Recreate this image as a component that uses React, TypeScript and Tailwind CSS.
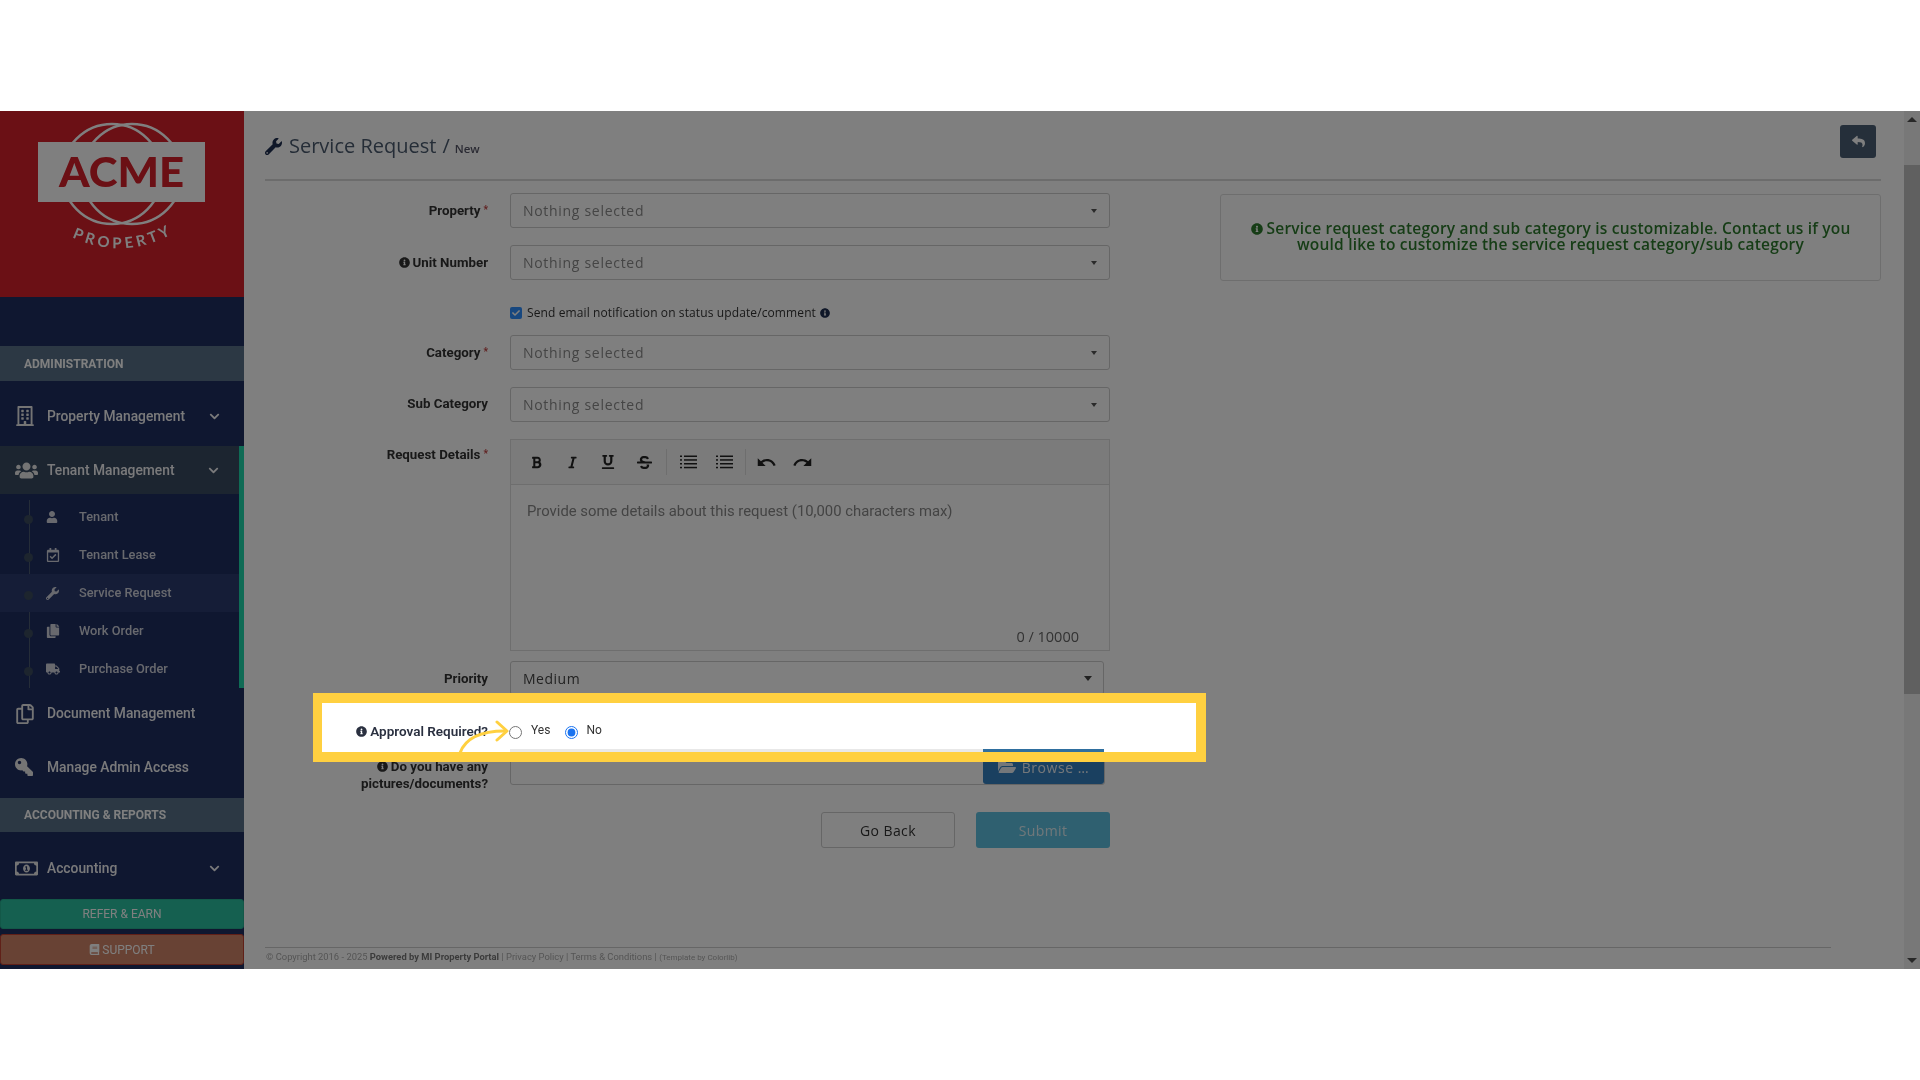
import React from 'react'
import {
  FaBold, FaBook, FaChevronDown, FaFolderOpen, FaInfoCircle, FaItalic, FaKey, FaRegBuilding,
  FaRegCalendarCheck, FaRegCopy, FaRegMoneyBillAlt, FaReply, FaStrikethrough, FaTruck, FaUnderline,
  FaUser, FaUsers, FaWrench, FaCheck, FaCopy,
} from 'react-icons/fa'
import { MdRedo, MdUndo } from 'react-icons/md'

const subItems = [
  { label: 'Tenant', icon: <FaUser size={12} /> },
  { label: 'Tenant Lease', icon: <FaRegCalendarCheck size={14} /> },
  { label: 'Service Request', icon: <FaWrench size={13} />, active: true },
  { label: 'Work Order', icon: <FaCopy size={14} /> },
  { label: 'Purchase Order', icon: <FaTruck size={14} /> },
]

function Logo() {
  return (
    <svg width="244" height="186" viewBox="0 111 244 186">
      <circle cx="112" cy="174" r="50" fill="none" stroke="#fff" strokeWidth="2.5" />
      <circle cx="132" cy="174" r="50" fill="none" stroke="#fff" strokeWidth="2.5" />
      <rect x="38" y="142" width="167" height="60" fill="#fff" />
      <text x="59" y="187" textLength="125" lengthAdjust="spacingAndGlyphs" fill="#d6202a" fontFamily="Lato" fontWeight="900" fontSize="41">ACME</text>
      <path id="logo-arc" d="M72 237 Q122 261 172 234" fill="none" />
      <text fill="#fff" fontFamily="Lato" fontWeight="700" fontSize="15" letterSpacing="3.7">
        <textPath href="#logo-arc">PROPERTY</textPath>
      </text>
    </svg>
  )
}

function ListIcon() {
  return (
    <svg width="17" height="14" viewBox="0 0 17 14" fill="currentColor">
      <rect x="0" y="0.5" width="2" height="1.5" />
      <rect x="0" y="4.2" width="2" height="1.5" />
      <rect x="0" y="8" width="2" height="1.5" />
      <rect x="0" y="11.8" width="2" height="1.5" />
      <rect x="4" y="0.5" width="13" height="1.5" />
      <rect x="4" y="4.2" width="13" height="1.5" />
      <rect x="4" y="8" width="13" height="1.5" />
      <rect x="4" y="11.8" width="13" height="1.5" />
    </svg>
  )
}

function NavRow({ icon, label, chevron, className }: { icon: React.ReactNode; label: string; chevron?: boolean; className: string }) {
  return (
    <div className={`flex items-center pl-[15px] text-[13.8px] font-medium text-[#f4f4f6] ${className}`}>
      <span className="flex w-[32px] shrink-0 text-[#e8e8e8]">{icon}</span>
      <span>{label}</span>
      {chevron && <FaChevronDown size={11} className="ml-auto" />}
    </div>
  )
}

function SectionHeader({ label, className }: { label: string; className: string }) {
  return (
    <div className={`flex items-center bg-[#587088] pl-6 text-[12px] font-bold text-[#fff] ${className}`}>{label}</div>
  )
}

function Sidebar() {
  return (
    <aside className="flex w-[244px] shrink-0 flex-col bg-[#1e2e60] font-['Roboto',sans-serif]">
      <div className="h-[186px] bg-[#d6202a]">
        <Logo />
      </div>
      <div className="h-[49px]" />
      <SectionHeader label="ADMINISTRATION" className="h-[35px]" />
      <NavRow icon={<FaRegBuilding size={20} />} label="Property Management" chevron className="mt-[8px] h-[54px] pr-[24px]" />
      <div className="mt-[3px] border-r-[5px] border-[#1ed6aa]">
        <NavRow icon={<FaUsers size={23} />} label="Tenant Management" chevron className="h-[48px] bg-[#384a60] pr-[20px]" />
        <div className="relative pt-[4px]">
          <div className="absolute bottom-0 left-[29px] top-[6px] w-px bg-[#4a5a70]" />
          {subItems.map((item) => (
            <div key={item.label} className={`relative flex h-[38px] items-center pl-[46px] text-[12.8px] font-medium text-[#d0d2dc] ${item.active ? 'bg-[#2a3a6e]' : ''}`}>
              <span className="absolute left-[24px] top-[17px] h-[9px] w-[9px] rounded-full bg-[#3a4a5c]" />
              <span className="w-[33px]">{item.icon}</span>
              <span>{item.label}</span>
            </div>
          ))}
        </div>
      </div>
      <NavRow icon={<FaRegCopy size={20} />} label="Document Management" className="h-[51px]" />
      <NavRow icon={<FaKey size={18} className="-scale-x-100" />} label="Manage Admin Access" className="mt-[1px] h-[54px]" />
      <SectionHeader label="ACCOUNTING &amp; REPORTS" className="mt-[4px] h-[34px]" />
      <NavRow icon={<FaRegMoneyBillAlt size={23} />} label="Accounting" chevron className="mt-[9px] h-[54px] pr-[24px]" />
      <div className="mt-[4px] flex h-[30px] items-center justify-center rounded-[3px] border border-[#26b090] bg-[#2ac0a0] text-[12px] text-white">REFER &amp; EARN</div>
      <div className="mt-[5px] flex h-[31px] items-center justify-center gap-[2px] rounded-[3px] border border-[#c04030] bg-[#d08468] text-[12px] text-white">
        <FaBook size={11} /> SUPPORT
      </div>
    </aside>
  )
}

function FormRow({ label, required, info, className, labelClass, children }: {
  label: React.ReactNode; required?: boolean; info?: boolean; className: string; labelClass?: string; children: React.ReactNode
}) {
  return (
    <div className={`flex gap-[22px] ${className}`}>
      <label className={`w-[223px] shrink-0 text-right font-['Roboto',sans-serif] text-[13.3px] font-bold leading-[17px] text-[#333] ${labelClass ?? 'self-center'}`}>
        {info && <FaInfoCircle size={11} className="mr-[3px] inline align-[-1px]" />}
        {label}
        {required && <span className="ml-[3px] align-[2px] text-[10px] text-[#c04040]">*</span>}
      </label>
      {children}
    </div>
  )
}

function SelectBox({ text = 'Nothing selected' }: { text?: string }) {
  return (
    <div className="flex h-[35px] w-[600px] items-center rounded-[3px] border border-[#ccc] bg-white pl-[12px] pr-[12px] font-['Open_Sans',sans-serif] text-[14px] tracking-[0.7px] text-[#8a8a8a]">
      {text}
      <span className="ml-auto h-0 w-0 border-x-[3.5px] border-t-[4px] border-x-transparent border-t-[#555]" />
    </div>
  )
}

function ToolButton({ children }: { children: React.ReactNode }) {
  return <span className="flex w-[36px] justify-center text-[#222]">{children}</span>
}

function MainPanel() {
  return (
    <main className="flex min-w-0 flex-1 flex-col bg-white pl-[21px] pr-[23px]">
      <header className="flex h-[70px] shrink-0 items-start border-b-2 border-[#d8d8d8]">
        <div className="mt-[20px] flex items-baseline font-['Open_Sans',sans-serif] text-[#4a5a6e]">
          <FaWrench size={17} className="mr-[7px] self-center text-[#1e2e50]" />
          <span className="text-[20px]">Service Request</span>
          <span className="ml-[6px] text-[20px]">/</span>
          <span className="ml-[5px] text-[11.5px] font-semibold text-[#556]">New</span>
        </div>
        <button className="ml-auto mr-[5px] mt-[14px] flex h-[33px] w-[36px] items-center justify-center rounded-[3px] bg-[#4a5f75] text-white">
          <FaReply size={13} />
        </button>
      </header>
      <div className="flex">
        <div className="w-[845px] shrink-0">
          <FormRow label="Property" required labelClass="self-center -translate-y-px" className="mt-[12px]"><SelectBox /></FormRow>
          <FormRow label="Unit Number" info className="mt-[17px]"><SelectBox /></FormRow>
          <div className="ml-[245px] mt-[25px] flex h-[16px] items-center font-['Open_Sans',sans-serif] text-[12px] tracking-[0.11px] text-[#333]">
            <span className="mr-[5px] flex h-[12px] w-[12px] items-center justify-center rounded-[2px] bg-[#2f8fff] text-white"><FaCheck size={8} /></span>
            Send email notification on status update/comment
            <FaInfoCircle size={10} className="ml-[4px] text-[#1e2e50]" />
          </div>
          <FormRow label="Category" required labelClass="self-center -translate-y-px" className="mt-[14px]"><SelectBox /></FormRow>
          <FormRow label="Sub Category" labelClass="self-center -translate-y-px" className="mt-[17px]"><SelectBox /></FormRow>
          <FormRow label="Request Details" required labelClass="pt-[6px]" className="mt-[17px]">
            <div className="flex h-[212px] w-[600px] flex-col border border-[#ddd] bg-white">
              <div className="flex h-[45px] shrink-0 items-center border-b border-[#ddd] bg-[#f7f7f7] pl-[7px]">
                <ToolButton><FaBold size={13} /></ToolButton>
                <ToolButton><FaItalic size={13} /></ToolButton>
                <ToolButton><FaUnderline size={14} /></ToolButton>
                <ToolButton><FaStrikethrough size={15} /></ToolButton>
                <span className="ml-[4px] mr-[3px] h-[26px] w-px bg-[#ddd]" />
                <ToolButton><ListIcon /></ToolButton>
                <ToolButton><ListIcon /></ToolButton>
                <span className="ml-[3px] mr-[2px] h-[26px] w-px bg-[#ddd]" />
                <ToolButton><MdUndo size={21} /></ToolButton>
                <ToolButton><MdRedo size={21} /></ToolButton>
              </div>
              <div className="px-[16px] pt-[15px] font-['Roboto',sans-serif] text-[14.85px] text-[#888]">Provide some details about this request (10,000 characters max)</div>
              <div className="mt-auto pb-[2px] pr-[30px] text-right font-['Open_Sans',sans-serif] text-[14.5px] text-[#666]">0 / 10000</div>
            </div>
          </FormRow>
          <FormRow label="Priority" className="mt-[10px]">
            <div className="flex h-[34px] w-[594px] items-center rounded-[3px] border border-[#ccc] bg-white px-[12px] font-['Open_Sans',sans-serif] text-[14px] tracking-[0.5px] text-[#444]">
              Medium
              <span className="ml-auto mr-[-1px] h-0 w-0 border-x-[4px] border-t-[5px] border-x-transparent border-t-[#444]" />
            </div>
          </FormRow>
          <FormRow
            label={<>Do you have any<br />pictures/documents?</>}
            info
            labelClass="pt-[9px]"
            className="mt-[54px]"
          >
            <div className="flex h-[36px] w-[595px] rounded-[3px] border border-[#ccc] bg-white">
              <button className="ml-auto flex w-[121px] items-center justify-center gap-[6px] rounded-[3px] bg-[#3480c0] font-['Open_Sans',sans-serif] text-[14px] tracking-[0.55px] text-[#e8eef4]">
                <FaFolderOpen size={18} /> Browse …
              </button>
            </div>
          </FormRow>
          <div className="ml-[556px] mt-[20px] flex gap-[21px] font-['Open_Sans',sans-serif] text-[14px] tracking-[0.4px]">
            <button className="h-[36px] w-[134px] rounded-[3px] border border-[#ccc] bg-white text-[#333]">Go Back</button>
            <button className="h-[36px] w-[134px] rounded-[3px] bg-[#5fc0e0] text-[#dfeff4]">Submit</button>
          </div>
        </div>
        <div className="ml-[110px] mt-[13px] flex h-[87px] w-[661px] items-center justify-center rounded-[3px] border border-[#ddd] bg-white px-[20px] pb-[4px] text-center font-['Open_Sans',sans-serif] text-[15.5px] font-semibold leading-[16px] tracking-[0.2px] text-[#2d7a2d]">
          <p>
            <FaInfoCircle size={12} className="mr-[4px] inline align-[-1px]" />
            Service request category and sub category is customizable. Contact us if you would like to customize the service request category/sub category
          </p>
        </div>
      </div>
      <footer className="mb-[2px] mr-[50px] mt-auto flex h-[20px] items-center border-t border-[#ccc] pl-[1px] font-['Roboto',sans-serif] text-[9.4px] text-[#aaa]">
        © Copyright 2016 - 2025&nbsp;<b className="text-[#777]">Powered by MI Property Portal</b>&nbsp;| Privacy Policy | Terms &amp; Conditions |&nbsp;<span className="text-[8px]">(Template by Colorlib)</span>
      </footer>
    </main>
  )
}

function Scrollbar() {
  return (
    <div className="flex w-[16px] shrink-0 flex-col items-center bg-[#f1f1f1]">
      <span className="mt-[6px] h-0 w-0 border-x-[5px] border-b-[5px] border-x-transparent border-b-[#505050]" />
      <div className="mt-[43px] h-[529px] w-full bg-[#c1c1c1]" />
      <span className="mb-[6px] mt-auto h-0 w-0 border-x-[5px] border-t-[5px] border-x-transparent border-t-[#505050]" />
    </div>
  )
}

function Highlight() {
  return (
    <div className="absolute left-[313px] top-[582px] h-[69px] w-[893px] border-y-[10px] border-l-[9px] border-r-[10px] border-[#ffd040]">
      <div className="relative flex h-full flex-col bg-white">
        <div className="mt-[18px] flex items-center font-['Roboto',sans-serif] text-[13px] text-[#333]">
          <label className="w-[166px] text-right text-[13.5px] font-semibold text-[#2a3040]">
            <FaInfoCircle size={11} className="mr-[3px] inline align-[-1px]" />
            Approval Required?
          </label>
          <input type="radio" readOnly name="approval" className="ml-[21px] h-[13px] w-[13px] translate-y-px" />
          <span className="ml-[9px] -translate-y-px text-[12px]">Yes</span>
          <input type="radio" readOnly checked name="approval" className="ml-[15px] h-[13px] w-[13px] translate-y-px accent-[#1a73f0]" />
          <span className="ml-[8px] -translate-y-px text-[12px]">No</span>
        </div>
        <div className="ml-[188px] mt-auto flex h-[3px] w-[594px]">
          <div className="flex-1 bg-[#e8e8e8]" />
          <div className="w-[121px] bg-[#2f6f9f]" />
        </div>
        <svg className="absolute left-[135px] top-[17px]" width="60" height="34" viewBox="0 0 60 34" fill="none" stroke="#ffd040" strokeWidth="3" strokeLinecap="round" strokeLinejoin="round">
          <path d="M3 33 C8 19 22 11 48 11" />
          <path d="M40 2 L50 11 L40 20" />
        </svg>
      </div>
    </div>
  )
}

export default function App() {
  return (
    <div className="flex h-screen flex-col bg-white">
      <div className="h-[111px] shrink-0" />
      <div className="relative flex h-[858px] shrink-0 overflow-hidden blur-[0.6px]">
        <Sidebar />
        <MainPanel />
        <Scrollbar />
        <div className="absolute inset-0 bg-black/50" />
        <Highlight />
      </div>
    </div>
  )
}
